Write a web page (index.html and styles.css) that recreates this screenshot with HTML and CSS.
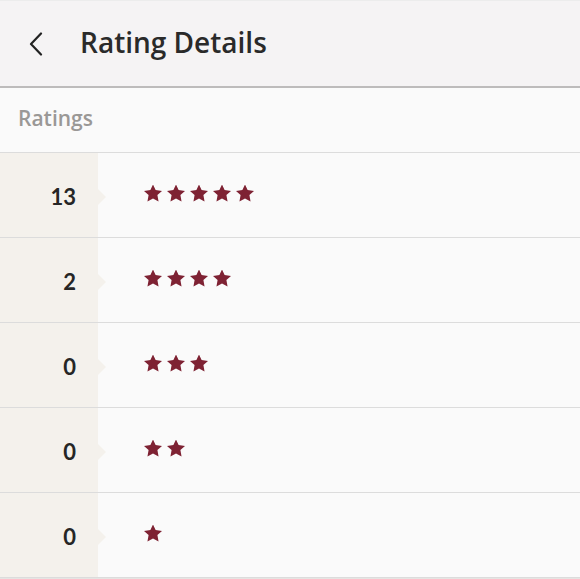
FILE: index.html
```html
<!DOCTYPE html>
<html>
<head>
<meta charset="utf-8">
<link rel="stylesheet" href="styles.css">
</head>
<body>
<header class="topbar">
  <svg class="back" width="16" height="24" viewBox="0 0 16 24"><path d="M13 1.5 L3 12 L13 22.5" fill="none" stroke="#222" stroke-width="2.2" stroke-linecap="round" stroke-linejoin="round"/></svg>
  <h1 class="title">Rating Details</h1>
</header>
<div class="section-label">Ratings</div>
<div class="rows">
  <div class="row"><div class="count">13</div><div class="stars"><span class="s"></span><span class="s"></span><span class="s"></span><span class="s"></span><span class="s"></span></div></div>
  <div class="row"><div class="count">2</div><div class="stars"><span class="s"></span><span class="s"></span><span class="s"></span><span class="s"></span></div></div>
  <div class="row"><div class="count">0</div><div class="stars"><span class="s"></span><span class="s"></span><span class="s"></span></div></div>
  <div class="row"><div class="count">0</div><div class="stars"><span class="s"></span><span class="s"></span></div></div>
  <div class="row"><div class="count">0</div><div class="stars"><span class="s"></span></div></div>
</div>
</body>
</html>
```
FILE: styles.css
```css
html, body {
  margin: 0;
  padding: 0;
  background: #e6e4e2;
  font-family: "Open Sans", "Lato", sans-serif;
}
.topbar {
  background: #f5f3f4;
  border-top: 1px solid #ececec;
  border-bottom: 2px solid #bdbbbb;
  box-sizing: border-box;
  height: 88px;
  display: flex;
  align-items: center;
  padding-left: 28px;
}
.back {
  display: block;
  margin-top: 0;
}
.title {
  margin: 0 0 3px 36px;
  font-size: 28px;
  font-weight: 600;
  color: #2a2a2a;
  letter-spacing: 0;
}
.section-label {
  height: 65px;
  box-sizing: border-box;
  background: #fafafa;
  border-bottom: 1px solid #dcdcdc;
  display: flex;
  align-items: center;
  padding: 0 0 4px 18px;
  font-size: 21px;
  color: #9a9896;
  font-weight: 600;
}
.row {
  height: 85px;
  box-sizing: border-box;
  border-bottom: 1px solid #dcdcdc;
  display: flex;
  background: #fafafa;
}
.count {
  width: 98px;
  box-sizing: border-box;
  background: #f4f1ec;
  display: flex;
  align-items: center;
  justify-content: flex-end;
  padding: 3px 22px 0 0;
  font-family: "Lato", sans-serif;
  font-size: 22px;
  font-weight: 700;
  color: #262626;
  position: relative;
}
.count::after {
  content: "";
  position: absolute;
  right: -8px;
  top: 50%;
  margin-top: -6px;
  border-top: 8px solid transparent;
  border-bottom: 8px solid transparent;
  border-left: 8px solid #f4f1ec;
}
.stars {
  display: flex;
  align-items: center;
  gap: 5px;
  padding-left: 46px;
  padding-bottom: 4px;
}
.s {
  width: 18px;
  height: 17px;
  background: #7e2233;
  clip-path: polygon(50% 0%, 64.5% 33%, 100% 38.2%, 74.5% 62%, 80.9% 100%, 50% 83%, 19.1% 100%, 25.5% 62%, 0% 38.2%, 35.5% 33%);
}
```
